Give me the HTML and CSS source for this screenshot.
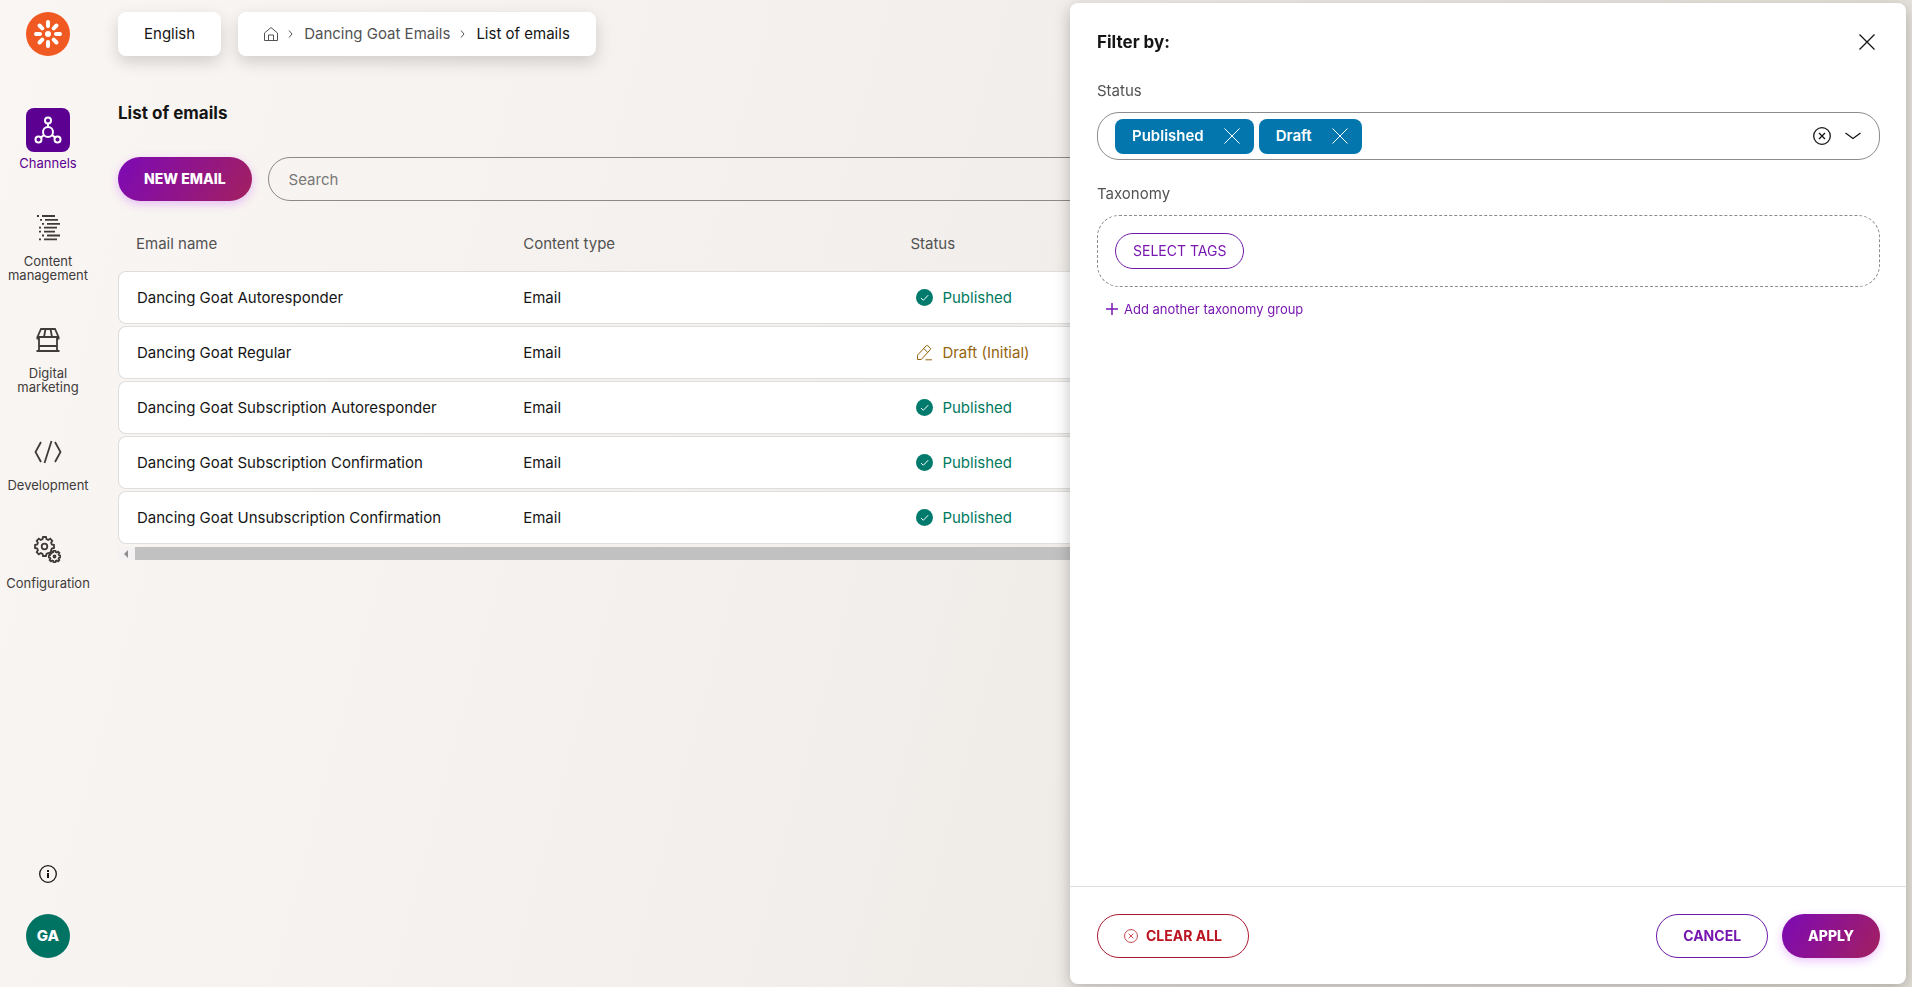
FILE: index.html
```html
<!DOCTYPE html>
<html lang="en">
<head>
    <meta charset="UTF-8">
    <meta name="viewport" content="width=device-width, initial-scale=1.0">
    <title>List of emails</title>
    <link rel="stylesheet" href="styles.css">
</head>
<body>
    <!-- shared icons -->
    <svg class="sprite" aria-hidden="true">
        <symbol id="cross" viewBox="0 0 16 16"><path d="M.5.5l15 15M15.500.5l-15 15"/></symbol>
        <symbol id="circle-cross" viewBox="0 0 18 18"><circle cx="9" cy="9" r="8.300"/><path d="M6 6l6 6M12 6l-6 6"/></symbol>
        <symbol id="chevron" viewBox="0 0 6 10"><path d="M1 1.500l3 3.500-3 3.500"/></symbol>
        <symbol id="published" viewBox="0 0 17 17"><circle cx="8.500" cy="8.500" r="8.500" fill="#007a6c" stroke="none"/><path d="M5 9l2.300 2.300L12.200 6.200" stroke="#fff"/></symbol>
        <symbol id="draft" viewBox="0 0 17 17"><path d="M1.500 15.500v-4.300L10.200 1.800q.8-.8 1.700 0l2.300 2.200q.8.8 0 1.700L5.300 15.500zM7.800 4.500l3.900 4M9.500 15.800h6.500"/></symbol>
        <symbol id="gear" viewBox="0 0 21 21"><path vector-effect="non-scaling-stroke" d="M8.500 3.200L9 1h3l.5 2.200 1.700.7 2-1.200 2.100 2.100-1.200 2 .7 1.700L20 9v3l-2.200.5-.7 1.700 1.200 2-2.100 2.100-2-1.200-1.700.7L12 20H9l-.5-2.200-1.700-.7-2 1.200-2.100-2.100 1.200-2-.7-1.700L1 12V9l2.200-.5.700-1.700-1.200-2 2.100-2.100 2 1.200z"/></symbol>
    </svg>

    <nav class="sidebar">
        <a class="logo" href="#" aria-label="Home">
            <svg viewBox="0 0 44 44" width="44" height="44">
                <circle cx="22" cy="22" r="22" fill="#f05a22"/>
                <circle cx="22" cy="22" r="3" fill="#fff"/>
                <g stroke="#fff" stroke-width="4" stroke-linecap="round">
                    <path d="M22 10v4M22 30v4M10 22h4M30 22h4M13.500 13.500l2.800 2.800M27.700 27.700l2.800 2.800M30.500 13.500l-2.800 2.800M16.300 27.700l-2.800 2.800"/>
                </g>
            </svg>
        </a>
        <ul class="menu">
            <li>
                <a class="active" href="#">
                    <span class="icon">
                        <svg viewBox="0 0 28 28" width="28" height="28" stroke-width="2">
                            <circle cx="14" cy="16" r="5"/><circle cx="14" cy="4.500" r="3"/>
                            <circle cx="4.500" cy="23.500" r="3"/><circle cx="23.500" cy="23.500" r="3"/>
                            <path d="M14 7.500V11M10 19l-3.200 2.600M18 19l3.200 2.600"/>
                        </svg>
                    </span>
                    Channels
                </a>
            </li>
            <li>
                <a href="#">
                    <span class="icon">
                        <svg viewBox="0 0 24 26" width="24" height="26" stroke-width="1.800">
                            <path d="M1 1h2M6 1h13M4 4.900h2M9 4.900h13M6 8.800h2M11 8.800h13M3 12.700h2M8 12.700h13M3 16.600h2M8 16.600h11M6 20.500h2M11 20.500h13M3 24.400h2M8 24.400h13"/>
                        </svg>
                    </span>
                    Content management
                </a>
            </li>
            <li>
                <a href="#">
                    <span class="icon">
                        <svg viewBox="0 0 24 24" width="24" height="24" stroke-width="1.800">
                            <path d="M5 1h14l3.500 8h-21zM9.500 1L8 9M14.500 1L16 9M1.500 9v2.500M22.500 9v2.500M3 9.500v13.500M21 9.500v13.500M3 18h18M.5 23h23"/>
                        </svg>
                    </span>
                    Digital marketing
                </a>
            </li>
            <li>
                <a href="#">
                    <span class="icon">
                        <svg viewBox="0 0 28 24" width="28" height="24" stroke-width="1.800">
                            <path d="M7 2L1.500 12 7 22M21 2l5.500 10L21 22M17.500 1l-7 22"/>
                        </svg>
                    </span>
                    Development
                </a>
            </li>
            <li>
                <a href="#">
                    <span class="icon">
                        <svg viewBox="0 0 28 28" width="28" height="28" stroke-width="1.800">
                            <use href="#gear" width="21" height="21"/>
                            <circle cx="10.500" cy="10.500" r="2.800"/>
                            <use href="#gear" x="14" y="14" width="13" height="13"/>
                            <circle cx="20.500" cy="20.500" r="1"/>
                        </svg>
                    </span>
                    Configuration
                </a>
            </li>
        </ul>
        <button class="info" type="button" aria-label="Info">
            <svg viewBox="0 0 18 18" width="18" height="18">
                <circle cx="9" cy="9" r="8.300" stroke-width="1.300"/><path d="M9 8v5M9 5v2" stroke-width="2"/>
            </svg>
        </button>
        <button class="avatar" type="button">GA</button>
    </nav>

    <main class="content">
        <header class="topbar">
            <button class="language" type="button">English</button>
            <nav class="breadcrumbs">
                <a href="#" aria-label="Home">
                    <svg viewBox="0 0 14 14" width="14" height="14"><path d="M.5 13.500v-7.500L7 .5l6.500 5.500v7.500zM4.500 13.500V8h5v5.500"/></svg>
                </a>
                <svg class="chevron"><use href="#chevron"/></svg>
                <a href="#">Dancing Goat Emails</a>
                <svg class="chevron"><use href="#chevron"/></svg>
                <span class="current">List of emails</span>
            </nav>
        </header>

        <h1>List of emails</h1>

        <div class="toolbar">
            <button class="btn primary" type="button">NEW EMAIL</button>
            <input class="search" type="text" placeholder="Search" aria-label="Search">
        </div>

        <div class="table-wrap">
            <table>
                <thead>
                    <tr><th>Email name</th><th>Content type</th><th>Status</th><th></th><th></th></tr>
                </thead>
                <tbody>
                    <tr>
                        <td>Dancing Goat Autoresponder</td>
                        <td>Email</td>
                        <td><span class="status published"><svg><use href="#published"/></svg>Published</span></td>
                        <td></td><td></td>
                    </tr>
                    <tr>
                        <td>Dancing Goat Regular</td>
                        <td>Email</td>
                        <td><span class="status draft"><svg><use href="#draft"/></svg>Draft (Initial)</span></td>
                        <td></td><td></td>
                    </tr>
                    <tr>
                        <td>Dancing Goat Subscription Autoresponder</td>
                        <td>Email</td>
                        <td><span class="status published"><svg><use href="#published"/></svg>Published</span></td>
                        <td></td><td></td>
                    </tr>
                    <tr>
                        <td>Dancing Goat Subscription Confirmation</td>
                        <td>Email</td>
                        <td><span class="status published"><svg><use href="#published"/></svg>Published</span></td>
                        <td></td><td></td>
                    </tr>
                    <tr>
                        <td>Dancing Goat Unsubscription Confirmation</td>
                        <td>Email</td>
                        <td><span class="status published"><svg><use href="#published"/></svg>Published</span></td>
                        <td></td><td></td>
                    </tr>
                </tbody>
            </table>
        </div>
        <div class="scrollbar">
            <span class="arrow"></span>
            <span class="thumb"></span>
        </div>
    </main>

    <form class="panel">
        <div class="panel-body">
            <div class="panel-header">
                <h2>Filter by:</h2>
                <button class="icon-btn" type="button" aria-label="Close"><svg width="16" height="16"><use href="#cross"/></svg></button>
            </div>

            <label for="status">Status</label>
            <div class="select">
                <span class="chip">Published <button type="button" aria-label="Remove Published"><svg width="16" height="16"><use href="#cross"/></svg></button></span>
                <span class="chip">Draft <button type="button" aria-label="Remove Draft"><svg width="16" height="16"><use href="#cross"/></svg></button></span>
                <input type="text" id="status">
                <button class="icon-btn" type="button" aria-label="Clear"><svg width="18" height="18"><use href="#circle-cross"/></svg></button>
                <button class="icon-btn" type="button" aria-label="Open"><svg viewBox="0 0 16 8" width="16" height="8"><path d="M.5 1l7.500 5.500L15.500 1"/></svg></button>
            </div>

            <label for="tags">Taxonomy</label>
            <div class="taxonomy">
                <button class="tags" id="tags" type="button">SELECT TAGS</button>
            </div>
            <button class="add" type="button">
                <svg viewBox="0 0 12 12" width="12" height="12" stroke-width="1.500"><path d="M6 0v12M0 6h12"/></svg>
                Add another taxonomy group
            </button>
        </div>
        <div class="panel-footer">
            <button class="btn danger" type="reset"><svg width="14" height="14"><use href="#circle-cross"/></svg>CLEAR ALL</button>
            <button class="btn outline" type="button">CANCEL</button>
            <button class="btn primary" type="submit">APPLY</button>
        </div>
    </form>
</body>
</html>
```

FILE: styles.css
```css
* {
    margin: 0;
    padding: 0;
    box-sizing: border-box;
}

body {
    display: flex;
    min-height: 100vh;
    overflow: hidden;
    background: linear-gradient(105deg, #faf6f3, #f2eeeb 50%, #e2dfd7);
    color: #151515;
    font-family: Inter, 'Liberation Sans', sans-serif;
    font-size: 15px;
    line-height: 20px;
}

button,
input {
    font: inherit;
    color: inherit;
    background: none;
    border: none;
    outline: none;
}

button {
    cursor: pointer;
}

a {
    color: inherit;
    text-decoration: none;
}

svg {
    display: block;
    flex-shrink: 0;
    fill: none;
    stroke: currentColor;
}

.sprite {
    position: absolute;
    width: 0;
    height: 0;
}

/* sidebar */
.sidebar {
    display: flex;
    flex-direction: column;
    align-items: center;
    width: 96px;
    height: 100vh;
    padding: 12px 0 29px;
    flex-shrink: 0;
}

.logo svg {
    stroke: none;
}

.menu {
    list-style: none;
    margin-top: 52px;
    width: 100%;
}

.menu li {
    margin-bottom: 36px;
}

.menu a {
    display: flex;
    flex-direction: column;
    align-items: center;
    gap: 4px;
    padding: 0 4px;
    font-size: 13px;
    line-height: 14px;
    text-align: center;
    color: #403b3b;
}

.menu .icon {
    display: flex;
    align-items: center;
    justify-content: center;
    width: 44px;
    height: 44px;
    border-radius: 8px;
}

.menu .active {
    color: #5c0091;
}

.menu .active .icon {
    background: #5c0091;
    color: #fff;
}

.info {
    margin-top: auto;
    margin-bottom: 31px;
}

.avatar {
    width: 44px;
    height: 44px;
    border-radius: 50%;
    background: #007362;
    color: #fff;
    font-weight: 800;
}

/* main page */
.content {
    flex: 1;
    min-width: 0;
    padding: 12px 24px 24px 22px;
}

.topbar {
    display: flex;
    gap: 17px;
}

.language,
.breadcrumbs {
    display: flex;
    align-items: center;
    height: 44px;
    padding: 0 26px;
    border-radius: 8px;
    background: #fff;
    box-shadow: 0 6px 16px rgba(0, 0, 0, 0.16);
}

.breadcrumbs {
    gap: 10px;
    color: #525252;
}

.breadcrumbs .chevron {
    width: 6px;
    height: 10px;
}

.breadcrumbs .current {
    color: #151515;
}

h1,
h2 {
    font-size: 17px;
    font-weight: 700;
    line-height: 24px;
}

h1 {
    margin-top: 45px;
}

.toolbar {
    display: flex;
    gap: 16px;
    margin-top: 32px;
}

.btn {
    display: flex;
    align-items: center;
    justify-content: center;
    gap: 8px;
    height: 44px;
    padding: 0 26px;
    border: 1px solid;
    border-radius: 22px;
    font-size: 14px;
    font-weight: 700;
    white-space: nowrap;
}

.btn.primary {
    border: none;
    background: linear-gradient(120deg, #7d09b5, #a3205f);
    color: #fff;
    font-weight: 800;
    box-shadow: 0 3px 10px rgba(190, 60, 255, 0.3);
}

.btn.outline {
    border-color: #6d1aa5;
    color: #7817b0;
}

.btn.danger {
    border-color: #a91c33;
    color: #bb1521;
}

.search {
    flex: 1;
    height: 44px;
    padding: 0 20px;
    border: 1px solid #8c8987;
    border-radius: 22px;
}

.search::placeholder {
    color: #777;
}

.table-wrap {
    overflow: hidden;
    margin-top: 14px;
}

table {
    width: 1936px;
    table-layout: fixed;
    border-collapse: separate;
    border-spacing: 0 2px;
}

th {
    height: 52px;
    padding: 2px 18px 0;
    font-weight: 400;
    text-align: left;
    color: #525252;
}

td {
    height: 53px;
    padding: 0 18px;
    background: #fff;
    border-top: 1px solid #dededf;
    border-bottom: 1px solid #dededf;
}

td:first-child {
    border-left: 1px solid #dededf;
    border-radius: 8px 0 0 8px;
}

.status {
    display: flex;
    align-items: center;
    gap: 9px;
    padding-left: 6px;
}

.status svg {
    width: 17px;
    height: 17px;
}

.status.published {
    color: #007a5e;
}

.status.draft {
    color: #96640f;
}

.scrollbar {
    display: flex;
    align-items: center;
    height: 13px;
    margin-top: 1px;
    background: #f4f2f2;
}

.scrollbar .arrow {
    margin: 0 7px 0 6px;
    border: 4px solid transparent;
    border-left: none;
    border-right-color: #8f8f8f;
}

.scrollbar .thumb {
    flex: 1;
    height: 100%;
    background: #c1c1c1;
}

/* filter panel, slides over the page */
.panel {
    position: fixed;
    top: 3px;
    right: 6px;
    bottom: 3px;
    display: flex;
    flex-direction: column;
    width: calc(50% - 120px);
    border-radius: 8px;
    background: #fff;
    box-shadow: 0 4px 16px rgba(0, 0, 0, 0.25);
}

.panel-body {
    flex: 1;
    padding: 27px 26px 27px 27px;
}

.panel-header {
    display: flex;
    justify-content: space-between;
    align-items: center;
    margin-bottom: 27px;
}

.panel-header .icon-btn {
    margin-right: 5px;
}

.icon-btn svg {
    stroke-width: 1.3;
}

.panel label {
    display: block;
    color: #525252;
}

.select {
    display: flex;
    align-items: center;
    height: 48px;
    margin: 11px 0 24px;
    padding: 0 18px 0 17px;
    border: 1px solid #8c8c8c;
    border-radius: 22px;
}

.select input {
    flex: 1;
    min-width: 0;
}

.select .icon-btn {
    margin-left: 14px;
}

.chip {
    display: flex;
    align-items: center;
    gap: 20px;
    height: 35px;
    margin-right: 5px;
    padding: 0 14px 0 17px;
    border-radius: 8px;
    background: #0377ad;
    color: #fff;
    font-weight: 600;
}

.taxonomy {
    margin-top: 11px;
    padding: 17px;
    border: 1px dashed #8c8c8c;
    border-radius: 22px;
}

.tags {
    display: block;
    height: 36px;
    padding: 0 17px;
    border: 1px solid #6d1aa5;
    border-radius: 18px;
    color: #7817b0;
    font-size: 14px;
}

.add {
    display: flex;
    align-items: center;
    gap: 6px;
    margin: 12px 0 0 9px;
    color: #7817b0;
    font-size: 13px;
}

.panel-footer {
    display: flex;
    gap: 14px;
    padding: 27px 26px 26px 27px;
    border-top: 1px solid #dedede;
}

.panel-footer .danger {
    margin-right: auto;
}
```
